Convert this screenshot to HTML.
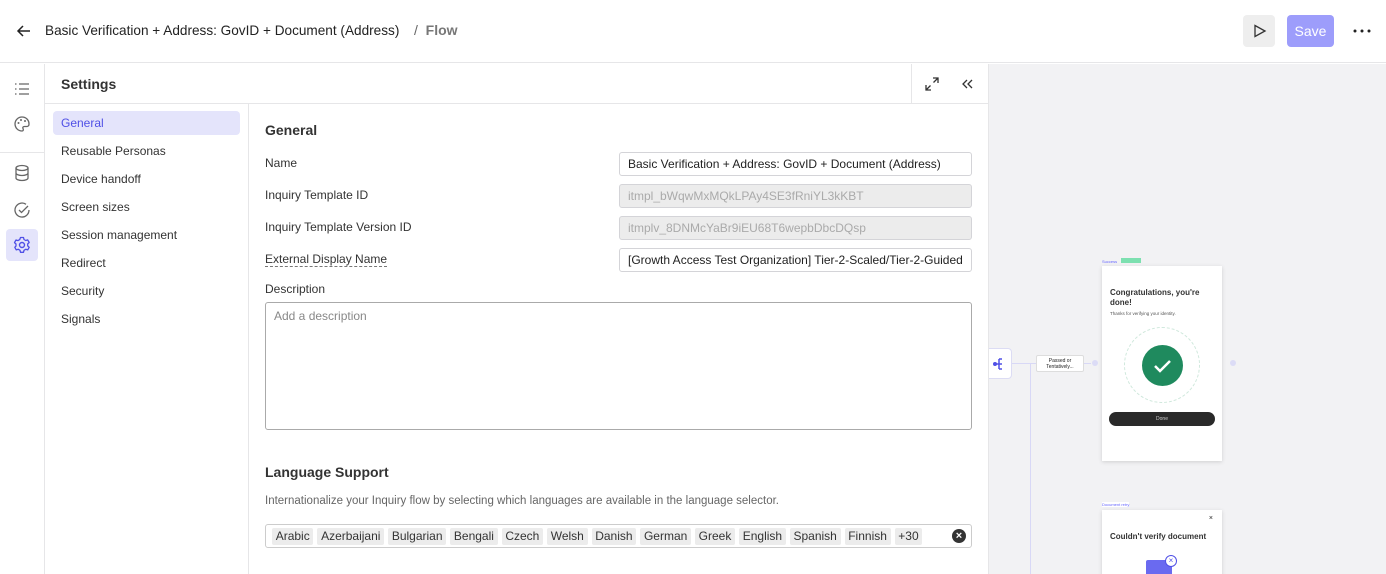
<!DOCTYPE html>
<html><head><style>
*{box-sizing:border-box;margin:0;padding:0}
body{width:1386px;height:574px;overflow:hidden;font-family:"Liberation Sans",sans-serif;color:#222;background:#fff;position:relative}
.abs{position:absolute}
.hdr{left:0;top:0;width:1386px;height:63px;border-bottom:1px solid #e6e6e8}
.rail{left:0;top:64px;width:45px;height:510px;border-right:1px solid #e6e6e8}
.panel{left:45px;top:64px;width:944px;height:510px;border-right:1px solid #e6e6e8}
.canvas{left:989px;top:64px;width:397px;height:510px;background:#f2f2f4;overflow:hidden}
.nav div{position:absolute;left:8px;width:187px;height:24px;line-height:24px;padding-left:8px;font-size:12px;color:#333}
.lbl{position:absolute;left:265px;font-size:12px;color:#333}
.inp{position:absolute;left:619px;width:353px;height:24px;border:1px solid #d4d4d8;border-radius:3px;font-size:12px;line-height:22px;padding-left:8px;white-space:nowrap;overflow:hidden}
.dis{background:#ececec;color:#aaa}
.tag{background:#ececec;border-radius:2px;padding:0 3.7px;height:17px;line-height:17px;font-size:12px;color:#333}
</style></head><body>
<div class="abs hdr">
 <svg class="abs" style="left:16px;top:24px" width="16" height="14" viewBox="0 0 16 14"><path d="M14 7H2M7 2L2 7l5 5" stroke="#222" stroke-width="1.5" fill="none"/></svg>
 <div class="abs" style="left:45px;top:23px;font-size:13.6px;color:#222">Basic Verification + Address: GovID + Document (Address)</div>
 <div class="abs" style="left:414px;top:22px;font-size:14px;color:#666">/&nbsp; <b style="font-weight:600;color:#777">Flow</b></div>
 <div class="abs" style="left:1243px;top:15px;width:32px;height:32px;background:#eee;border-radius:4px"><svg style="margin:9px 0 0 10px" width="14" height="14" viewBox="0 0 14 14"><path d="M2 1.5L12 7 2 12.5z" stroke="#333" stroke-width="1.3" fill="none"/></svg></div>
 <div class="abs" style="left:1287px;top:15px;width:47px;height:32px;background:#9d9dfb;border-radius:4px;color:#fff;font-size:14px;line-height:32px;text-align:center">Save</div>
 <svg class="abs" style="left:1353px;top:29px" width="18" height="4" viewBox="0 0 18 4"><circle cx="2" cy="2" r="1.5" fill="#222"/><circle cx="9" cy="2" r="1.5" fill="#222"/><circle cx="16" cy="2" r="1.5" fill="#222"/></svg>
</div>
<div class="abs rail">
 <svg class="abs" style="left:14px;top:18px" width="16" height="14" viewBox="0 0 16 14"><g stroke="#666" stroke-width="1.3"><path d="M5 2h10M5 7h10M5 12h10M1 2h1.5M1 7h1.5M1 12h1.5"/></g></svg>
 <svg class="abs" style="left:13px;top:51px" width="18" height="18" viewBox="0 0 18 18"><path d="M9 2a7 7 0 0 0 0 14c1.5 0 1.5-1.5 1-2.5s0-2 1.5-2H14a2.5 2.5 0 0 0 2-2.5C16 5 13 2 9 2z" stroke="#666" stroke-width="1.3" fill="none"/><circle cx="5.5" cy="8" r="1" fill="#666"/><circle cx="8" cy="5" r="1" fill="#666"/><circle cx="12" cy="6" r="1" fill="#666"/></svg>
 <div class="abs" style="left:0;top:88px;width:44px;border-top:1px solid #e6e6e8"></div>
 <svg class="abs" style="left:14px;top:100px" width="16" height="18" viewBox="0 0 16 18"><ellipse cx="8" cy="4" rx="6" ry="2.5" stroke="#666" stroke-width="1.3" fill="none"/><path d="M2 4v10c0 1.4 2.7 2.5 6 2.5s6-1.1 6-2.5V4M2 9c0 1.4 2.7 2.5 6 2.5S14 10.4 14 9" stroke="#666" stroke-width="1.3" fill="none"/></svg>
 <svg class="abs" style="left:13px;top:137px" width="18" height="18" viewBox="0 0 18 18"><path d="M16 9a7 7 0 1 1-3-5.7" stroke="#666" stroke-width="1.3" fill="none"/><path d="M6 9l2.5 2.5L15 5" stroke="#666" stroke-width="1.3" fill="none"/></svg>
 <div class="abs" style="left:6px;top:165px;width:32px;height:32px;background:#e4e4fb;border-radius:4px"><svg style="margin:7px" width="18" height="18" viewBox="0 0 18 18"><circle cx="9" cy="9" r="2.5" stroke="#5050e6" stroke-width="1.4" fill="none"/><path d="M7.5 1.5h3l.5 2 1.7 1 2-.6 1.5 2.6-1.5 1.4v2l1.5 1.4-1.5 2.6-2-.6-1.7 1-.5 2h-3l-.5-2-1.7-1-2 .6-1.5-2.6L3 10V8L1.5 6.6 3 4l2 .6 1.7-1z" stroke="#5050e6" stroke-width="1.3" fill="none" stroke-linejoin="round"/></svg></div>
</div>
<div class="abs panel">
 <div class="abs" style="left:16px;top:12px;font-size:14px;font-weight:bold;color:#333">Settings</div>
 <div class="abs" style="left:866px;top:0;width:1px;height:39px;background:#e6e6e8"></div>
 <svg class="abs" style="left:880px;top:13px" width="14" height="14" viewBox="0 0 14 14"><path d="M8 1h5v5M13 1L8.5 5.5M6 13H1V8M1 13l4.5-4.5" stroke="#333" stroke-width="1.3" fill="none"/></svg>
 <svg class="abs" style="left:917px;top:15px" width="12" height="10" viewBox="0 0 12 10"><path d="M5 1L1 5l4 4M10 1L6 5l4 4" stroke="#333" stroke-width="1.3" fill="none"/></svg>
 <div class="abs" style="left:0;top:39px;width:943px;border-top:1px solid #e6e6e8"></div>
 <div class="abs" style="left:203px;top:40px;width:1px;height:470px;background:#e6e6e8"></div>
 <div class="nav">
  <div style="top:47px;background:#e4e4fb;color:#5050e6;border-radius:4px">General</div>
  <div style="top:75px">Reusable Personas</div>
  <div style="top:103px">Device handoff</div>
  <div style="top:131px">Screen sizes</div>
  <div style="top:159px">Session management</div>
  <div style="top:187px">Redirect</div>
  <div style="top:215px">Security</div>
  <div style="top:243px">Signals</div>
 </div>
</div>
<div class="abs" style="left:265px;top:122px;font-size:14px;font-weight:bold;color:#333">General</div>
<div class="lbl" style="top:156px">Name</div>
<div class="lbl" style="top:188px">Inquiry Template ID</div>
<div class="lbl" style="top:220px">Inquiry Template Version ID</div>
<div class="lbl" style="top:252px;border-bottom:1px dashed #777">External Display Name</div>
<div class="inp" style="top:152px">Basic Verification + Address: GovID + Document (Address)</div>
<div class="inp dis" style="top:184px">itmpl_bWqwMxMQkLPAy4SE3fRniYL3kKBT</div>
<div class="inp dis" style="top:216px">itmplv_8DNMcYaBr9iEU68T6wepbDbcDQsp</div>
<div class="inp" style="top:248px">[Growth Access Test Organization] Tier-2-Scaled/Tier-2-Guided</div>
<div class="lbl" style="top:282px">Description</div>
<div class="abs" style="left:265px;top:302px;width:707px;height:128px;border:1px solid #aaa;border-radius:3px;font-size:12px;color:#888;padding:6px 8px">Add a description</div>
<div class="abs" style="left:265px;top:464px;font-size:14px;font-weight:bold;color:#333">Language Support</div>
<div class="abs" style="left:265px;top:495px;font-size:11.5px;color:#666">Internationalize your Inquiry flow by selecting which languages are available in the language selector.</div>
<div class="abs" style="left:265px;top:524px;width:707px;height:24px;border:1px solid #ccc;border-radius:3px;display:flex;align-items:center;gap:4px;padding-left:6px">
 <span class="tag">Arabic</span><span class="tag">Azerbaijani</span><span class="tag">Bulgarian</span><span class="tag">Bengali</span><span class="tag">Czech</span><span class="tag">Welsh</span><span class="tag">Danish</span><span class="tag">German</span><span class="tag">Greek</span><span class="tag">English</span><span class="tag">Spanish</span><span class="tag">Finnish</span><span class="tag">+30</span>
 <span class="abs" style="right:5px;top:4px;width:14px;height:14px;border-radius:50%;background:#333;color:#fff;font-size:11px;line-height:14px;text-align:center;font-weight:bold">×</span>
</div>
<div class="abs canvas">
 <div class="abs" style="left:41px;top:299px;width:1px;height:220px;background:#d8d8f6"></div>
 <div class="abs" style="left:22px;top:299px;width:80px;height:1px;background:#d8d8f6"></div>
 <div class="abs" style="left:-6px;top:284px;width:29px;height:31px;background:#fff;border:1px solid #dcdcf4;border-radius:4px">
  <svg style="position:absolute;left:9px;top:9px" width="10" height="12" viewBox="0 0 10 12"><circle cx="2" cy="6" r="2" fill="#5050e6"/><path d="M2 6h4M6 1v10M6 1h3M6 6h3M6 11h3" stroke="#5050e6" stroke-width="1.5"/></svg>
 </div>
 <div class="abs" style="left:47px;top:291px;width:48px;height:17px;background:#fff;border:1px solid #ddd;border-radius:2px;font-size:5px;text-align:center;line-height:6px;padding-top:2px">Passed or<br>Tentatively...</div>
 <div class="abs" style="left:103px;top:296px;width:6px;height:6px;border-radius:50%;background:#dcdcf6"></div>
 <div class="abs" style="left:241px;top:296px;width:6px;height:6px;border-radius:50%;background:#dcdcf6"></div>
 <div class="abs" style="left:113px;top:195px;font-size:4px;color:#66f">Success</div>
 <div class="abs" style="left:132px;top:194px;width:20px;height:5px;background:#7de0b0"></div>
 <div class="abs" style="left:113px;top:202px;width:120px;height:195px;background:#fff;box-shadow:0 1px 4px rgba(0,0,0,.15)">
  <div style="position:absolute;left:8px;top:22px;font-size:8px;font-weight:bold;line-height:10px;color:#333">Congratulations, you're<br>done!</div>
  <div style="position:absolute;left:8px;top:45px;font-size:4.5px;color:#555">Thanks for verifying your identity.</div>
  <div style="position:absolute;left:22px;top:61px;width:76px;height:76px;border-radius:50%;border:1px dashed #cfe8dc"></div>
  <div style="position:absolute;left:40px;top:79px;width:41px;height:41px;border-radius:50%;background:#1f8a5e"><svg width="41" height="41" viewBox="0 0 41 41"><path d="M13 21l5 5 10-10" stroke="#fff" stroke-width="2.5" fill="none"/></svg></div>
  <div style="position:absolute;left:7px;top:146px;width:106px;height:14px;border-radius:7px;background:#2a2a2a;color:#ccc;font-size:5px;text-align:center;line-height:14px">Done</div>
 </div>
 <div class="abs" style="left:113px;top:438px;font-size:4px;color:#66f;background:#fff">Document retry</div>
 <div class="abs" style="left:113px;top:446px;width:120px;height:80px;background:#fff;box-shadow:0 1px 4px rgba(0,0,0,.15)">
  <div style="position:absolute;right:9px;top:5px;font-size:7px">×</div>
  <div style="position:absolute;left:8px;top:22px;font-size:8px;font-weight:bold;color:#333">Couldn't verify document</div>
  <div style="position:absolute;left:44px;top:50px;width:26px;height:20px;background:#6a6af0;border-radius:2px"></div>
  <div style="position:absolute;left:63px;top:45px;width:12px;height:12px;border-radius:50%;background:#fff;border:1px solid #5050e6;font-size:8px;line-height:10px;text-align:center;color:#5050e6">×</div>
 </div>
</div>
</body></html>
